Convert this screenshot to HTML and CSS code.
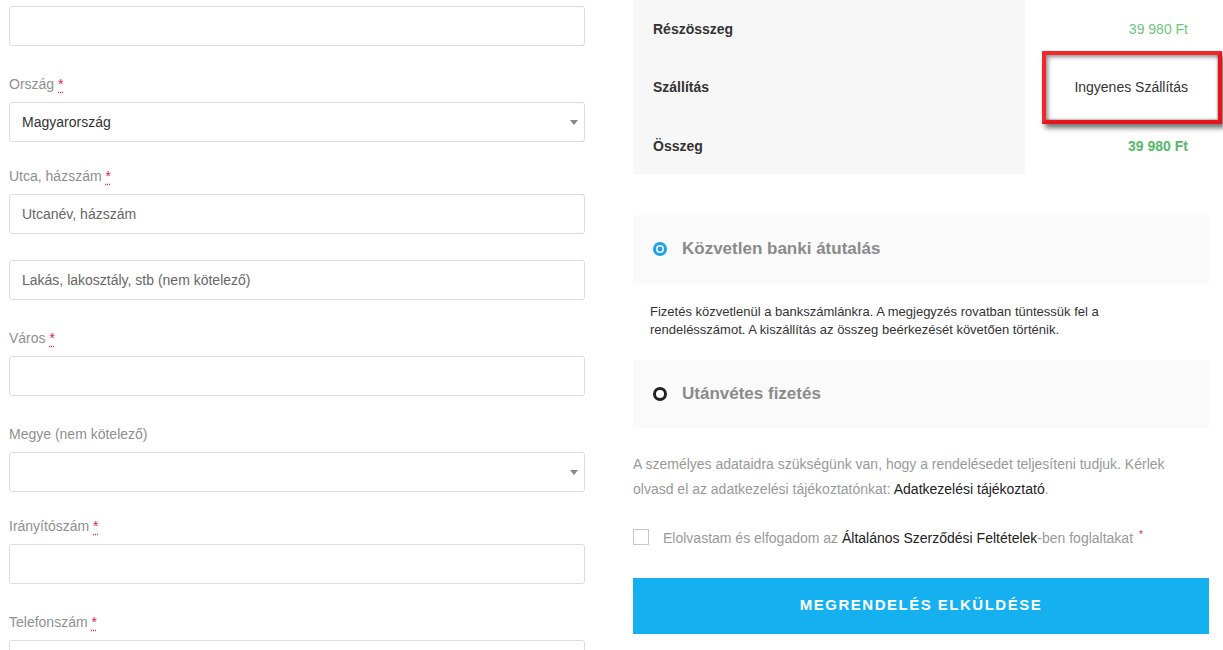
FILE: index.html
```html
<!DOCTYPE html>
<html lang="hu">
<head>
<meta charset="utf-8">
<title>Pénztár</title>
<link rel="stylesheet" href="styles.css">
</head>
<body>
<div class="page">
  <div class="col-left">
    <div class="field field--first">
      <input class="text-input" type="text">
    </div>
    <div class="field">
      <label class="field-label">Ország <abbr class="req">*</abbr></label>
      <div class="select-box"><span class="select-value">Magyarország</span><span class="select-arrow"></span></div>
    </div>
    <div class="field field--after-select">
      <label class="field-label">Utca, házszám <abbr class="req">*</abbr></label>
      <input class="text-input" type="text" placeholder="Utcanév, házszám">
      <input class="text-input text-input--second" type="text" placeholder="Lakás, lakosztály, stb (nem kötelező)">
    </div>
    <div class="field">
      <label class="field-label">Város <abbr class="req">*</abbr></label>
      <input class="text-input" type="text">
    </div>
    <div class="field">
      <label class="field-label">Megye (nem kötelező)</label>
      <div class="select-box"><span class="select-value"></span><span class="select-arrow"></span></div>
    </div>
    <div class="field field--after-select">
      <label class="field-label">Irányítószám <abbr class="req">*</abbr></label>
      <input class="text-input" type="text">
    </div>
    <div class="field">
      <label class="field-label">Telefonszám <abbr class="req">*</abbr></label>
      <input class="text-input" type="text">
    </div>
  </div>

  <div class="col-right">
    <table class="totals">
      <tr>
        <th>Részösszeg</th>
        <td class="amount">39 980 Ft</td>
      </tr>
      <tr>
        <th>Szállítás</th>
        <td class="shipping"><span class="highlight"></span><span class="shipping-text">Ingyenes Szállítás</span></td>
      </tr>
      <tr class="row-total">
        <th>Összeg</th>
        <td class="amount amount--total">39 980 Ft</td>
      </tr>
    </table>

    <div class="payment">
      <div class="pay-option">
        <span class="radio radio--on"></span>
        <span class="pay-title">Közvetlen banki átutalás</span>
      </div>
      <div class="pay-desc">Fizetés közvetlenül a bankszámlánkra. A megjegyzés rovatban tüntessük fel a rendelésszámot. A kiszállítás az összeg beérkezését követően történik.</div>
      <div class="pay-option">
        <span class="radio radio--off"></span>
        <span class="pay-title">Utánvétes fizetés</span>
      </div>
    </div>

    <p class="privacy">A személyes adataidra szükségünk van, hogy a rendelésedet teljesíteni tudjuk. Kérlek olvasd el az adatkezelési tájékoztatónkat: <a class="dark-link" href="#">Adatkezelési tájékoztató</a>.</p>

    <div class="terms">
      <span class="checkbox"></span>
      <span class="terms-text">Elolvastam és elfogadom az <a class="dark-link" href="#">Általános Szerződési Feltételek</a>-ben foglaltakat <span class="terms-req">*</span></span>
    </div>

    <button class="submit" type="button">MEGRENDELÉS ELKÜLDÉSE</button>
  </div>
</div>
</body>
</html>
```

FILE: styles.css
```css
* { box-sizing: border-box; }
html, body { margin: 0; padding: 0; background: #fff; }
body {
  font-family: "Liberation Sans", Arial, sans-serif;
  font-size: 14px;
  color: #333;
  overflow: hidden;
}
.page {
  display: flex;
  gap: 48px;
  padding-left: 9px;
  width: 1223px;
  height: 650px;
  overflow: hidden;
}
.col-left {
  width: 576px;
  flex: none;
  padding-top: 6px;
}
.col-right {
  width: 576px;
  flex: none;
  display: flex;
  flex-direction: column;
}

/* form */
.field { margin-top: 28px; }
.field--first { margin-top: 0; }
.field--after-select { margin-top: 24px; }
.field-label {
  display: block;
  line-height: 20px;
  margin-bottom: 8px;
  color: #8f8f8f;
  font-size: 14px;
}
.req {
  color: #e2224f;
  text-decoration: underline dotted #e2224f;
  text-underline-offset: 3px;
  border: 0;
}
.text-input, .select-box {
  display: block;
  width: 576px;
  height: 40px;
  border: 1px solid #dcdcdc;
  border-radius: 3px;
  background: #fff;
  padding: 0 12px;
  font-family: "Liberation Sans", Arial, sans-serif;
  font-size: 14px;
  color: #333;
  outline: none;
}
.text-input::placeholder { color: #666; opacity: 1; }
.text-input--second { margin-top: 26px; }
.select-box {
  display: flex;
  align-items: center;
  justify-content: space-between;
  padding-left: 12px;
  padding-right: 6px;
}
.select-value { color: #333; }
.select-arrow {
  width: 0; height: 0;
  border-left: 4px solid transparent;
  border-right: 4px solid transparent;
  border-top: 5px solid #888;
}

/* totals */
.totals {
  border-collapse: collapse;
  width: 576px;
}
.totals th {
  width: 392px;
  height: 58px;
  background: #f7f7f7;
  text-align: left;
  padding: 0 0 0 20px;
  font-weight: bold;
  font-size: 14px;
  color: #333;
}
.totals td {
  height: 58px;
  text-align: right;
  padding: 0 21px 0 0;
  font-size: 14px;
}
.totals .row-total th,
.totals .row-total td { padding-top: 2px; }
.amount { color: #6cc67a; }
.amount--total { font-weight: bold; color: #56b866; }
.shipping { position: relative; color: #333; }
.shipping-text { position: relative; }
.highlight {
  position: absolute;
  left: 17px;
  top: -7px;
  width: 180px;
  height: 73px;
  border: 4px solid #e8141b;
  border-top-color: #f0282c;
  border-left-color: #f0282c;
  background: #fff;
  box-shadow: 3px 4px 5px rgba(0,0,0,0.55), inset 2px 2px 4px rgba(0,0,0,0.45), inset -1px -1px 2px rgba(0,0,0,0.25);
}

/* payment */
.payment { margin-top: 41px; }
.pay-option {
  height: 68px;
  background: #fafafa;
  display: flex;
  align-items: center;
  padding-left: 20px;
  gap: 15px;
}
.radio {
  width: 14px;
  height: 14px;
  border-radius: 50%;
  flex: none;
}
.radio--on {
  border: 3px solid #1aa2ea;
  background: radial-gradient(circle, #1aa2ea 0 2.2px, #fff 2.8px);
}
.radio--off { border: 3px solid #222; background: #fff; }
.pay-title {
  font-size: 17px;
  font-weight: bold;
  color: #8a8a8a;
}
.pay-desc {
  padding: 20px 60px 21px 17px;
  font-size: 13px;
  line-height: 18px;
  color: #333;
}

.privacy {
  margin: 24px 0 0;
  font-size: 14px;
  line-height: 25px;
  color: #999;
  padding-right: 20px;
}
.dark-link { color: #222; text-decoration: none; }

.terms {
  display: flex;
  align-items: center;
  gap: 14px;
  margin-top: 27px;
  height: 16px;
}
.checkbox {
  width: 16px;
  height: 16px;
  border: 1px solid #c8c8c8;
  background: #fff;
  flex: none;
}
.terms-text { color: #999; font-size: 14px; }
.terms-req {
  color: #e2224f;
  font-size: 10px;
  vertical-align: 5px;
  margin-left: 2px;
}

.submit {
  margin-top: 33px;
  height: 56px;
  width: 576px;
  border: 0;
  padding: 0 0 4px;
  background: #14b0ef;
  color: #fff;
  font-family: "Liberation Sans", Arial, sans-serif;
  font-weight: bold;
  font-size: 15px;
  letter-spacing: 1.5px;
  cursor: pointer;
}
```
